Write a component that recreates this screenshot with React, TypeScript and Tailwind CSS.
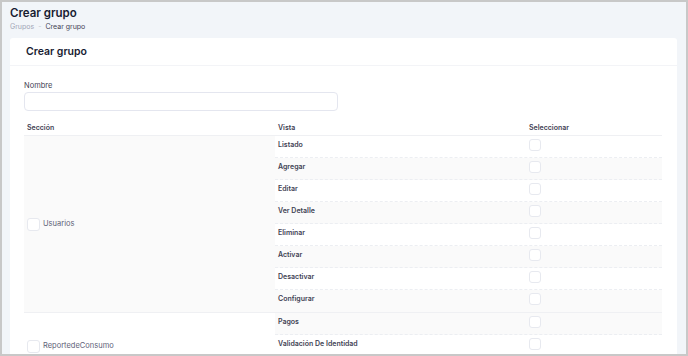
import React from 'react';

/* ── data ── */
interface Section {
  name: string;
  views: string[];
  bg: string;
  stripes: boolean[];
  last?: boolean;
}

const sections: Section[] = [
  {
    name: 'Usuarios',
    views: ['Listado', 'Agregar', 'Editar', 'Ver Detalle', 'Eliminar', 'Activar', 'Desactivar', 'Configurar'],
    bg: 'bg-[#fafafa]',
    stripes: [false, true, false, true, false, true, false, true],
  },
  {
    // third row sits below the fold, keeps the section cell centred like the original
    name: 'ReportedeConsumo',
    views: ['Pagos', 'Validación De Identidad', ''],
    bg: 'bg-white',
    stripes: [true, false, true],
    last: true,
  },
];

/* ── small checkbox box ── */
const Check: React.FC<{ size?: string }> = ({ size = 'w-[12px] h-[12px]' }) => (
  <span className={`${size} block shrink-0 rounded-[3px] border border-[#e7e9ef] bg-white`} />
);

/* ── one inner row (vista + checkbox) ── */
const ViewRow: React.FC<{ label: string; striped: boolean; last: boolean }> = ({ label, striped, last }) => (
  <div
    className={`flex h-[22px] items-start pt-[3px] ${striped ? 'bg-[#fafafa]' : 'bg-white'} ${
      last ? '' : 'border-b border-dashed border-[#eceef2]'
    }`}
  >
    <div className="w-[251px] pl-[3px] pt-[1px] text-[7px] leading-[10px] font-semibold text-[#3f4254]">{label}</div>
    <div className="flex-1 pl-[3px]">
      <Check />
    </div>
  </div>
);

export default function App() {
  return (
    <div className="w-[688px] h-[356px] overflow-hidden border-2 border-[#c8c8c8] bg-[#f2f5f9] font-['Inter',sans-serif]">
      {/* page header */}
      <div className="h-[36px] pl-[8px] pt-[3px]">
        <h1 className="text-[11.5px] leading-[16px] font-semibold text-[#181c32]">Crear grupo</h1>
        <div className="flex items-center gap-[4px] text-[7px] leading-[10px] mt-[1px]">
          <span className="text-[#a1a5b7]">Grupos</span>
          <span className="text-[#c4c7d2]">-</span>
          <span className="text-[#3f4254]">Crear grupo</span>
        </div>
      </div>

      {/* card */}
      <div className="ml-[8px] mr-[9px] bg-white rounded-t-[3px]">
        <div className="h-[28px] flex items-center pl-[16px] border-b border-[#f3f4f7]">
          <h2 className="text-[10.5px] font-semibold text-[#181c32]">Crear grupo</h2>
        </div>

        <div className="pl-[14px] pr-[15px] pt-[15px]">
          <label className="block text-[7.5px] leading-[10px] text-[#3f4254] mb-[1px]">Nombre</label>
          <div className="w-[314px] h-[19px] rounded-[4px] border border-[#e4e6ef] bg-white" />

          {/* table head */}
          <div className="mt-[8px] flex h-[17px] items-center pt-[2px] border-b border-[#eff0f3] text-[7px] font-semibold text-[#3f4254]">
            <div className="w-[251px] pl-[3px]">Sección</div>
            <div className="w-[251px] pl-[3px]">Vista</div>
            <div className="flex-1 pl-[3px]">Seleccionar</div>
          </div>

          {/* sections */}
          {sections.map((s) => (
            <div key={s.name} className={`flex ${s.last ? '' : 'border-b border-[#eff0f3]'}`}>
              <div className={`w-[251px] ${s.bg} flex items-center gap-[3px] pl-[3px]`}>
                <Check size="w-[13px] h-[13px]" />
                <span className="text-[7.5px] leading-[10px] text-[#5e6278]">{s.name}</span>
              </div>
              <div className="flex-1 flex flex-col">
                {s.views.map((v, i) => (
                  <ViewRow key={i} label={v} striped={s.stripes[i]} last={i === s.views.length - 1} />
                ))}
              </div>
            </div>
          ))}
        </div>
      </div>
    </div>
  );
}
